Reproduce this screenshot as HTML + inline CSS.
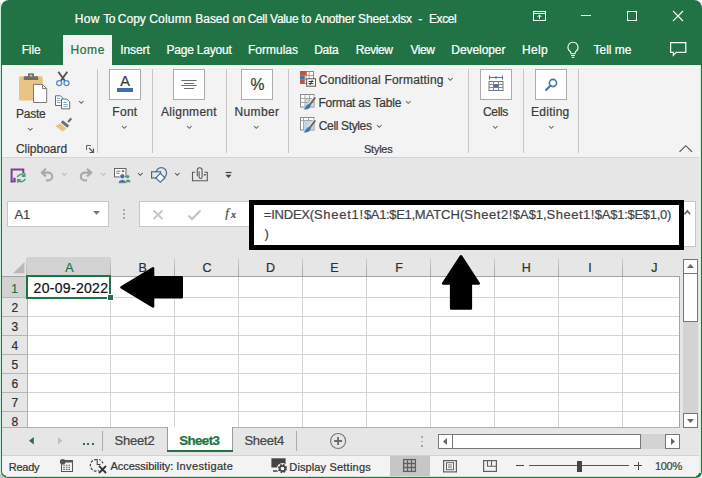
<!DOCTYPE html>
<html><head><meta charset="utf-8"><title>Excel</title>
<style>
html,body{margin:0;padding:0;background:#fff;}
body{width:702px;height:478px;overflow:hidden;position:relative;font-family:"Liberation Sans",sans-serif;}
#win{position:absolute;left:0;top:0;width:702px;height:478px;overflow:hidden;}
#frame{position:absolute;left:1px;top:0;width:701px;height:478px;background:#217346;border-radius:8px 8px 6px 7px;}
.a{position:absolute;}
.t{position:absolute;white-space:pre;line-height:normal;-webkit-text-stroke:0.22px currentColor;}
svg{position:absolute;overflow:visible;}
.sep{position:absolute;width:1px;background:#c6c6c6;top:69px;height:84px;}
.bigbtn{position:absolute;top:69px;width:30px;height:29px;background:#fff;border:1px solid #ababab;box-sizing:content-box;}
</style></head><body>
<div id="win">
<div class="a" style="left:0;top:470px;width:8px;height:8px;background:#c8c8c8"></div>
<div class="a" style="left:0;top:3px;width:1px;height:471px;background:#c9f0da"></div>
<div id="frame"></div>
<div class="a" style="left:2px;top:65px;width:697px;height:92px;background:#f3f3f3;"></div>
<div class="a" style="left:2px;top:157px;width:697px;height:1px;background:#d4d4d4;"></div>
<div class="a" style="left:2px;top:158px;width:697px;height:298px;background:#e6e6e6;"></div>
<div class="a" style="left:699px;top:65px;width:1px;height:92px;background:#f3f3f3;"></div>
<div class="a" style="left:699px;top:157px;width:1px;height:316px;background:#e6ece8;"></div>
<div class="a" style="left:700px;top:65px;width:1px;height:408px;background:#cfeedd;"></div>
<div class="a" style="left:2px;top:455px;width:697px;height:1px;background:#d2d2d2;"></div>
<div class="a" style="left:2px;top:456px;width:697px;height:20px;background:#f3f3f3;border-radius:0 0 4px 5px;"></div>
<div class="a" style="left:6px;top:476px;width:690px;height:1px;background:#c9e4d5;"></div>
<span class="t" style="left:74.74px;top:12.00px;font-size:12px;color:#fff;letter-spacing:0.320px;font-family:'Liberation Sans', sans-serif;">How </span><span class="t" style="left:103.36px;top:12.00px;font-size:12px;color:#fff;letter-spacing:-0.523px;font-family:'Liberation Sans', sans-serif;">To </span><span class="t" style="left:117.80px;top:12.00px;font-size:12px;color:#fff;letter-spacing:0.010px;font-family:'Liberation Sans', sans-serif;">Copy </span><span class="t" style="left:149.20px;top:12.00px;font-size:12px;color:#fff;letter-spacing:0.194px;font-family:'Liberation Sans', sans-serif;">Column </span><span class="t" style="left:195.24px;top:12.00px;font-size:12px;color:#fff;letter-spacing:-0.013px;font-family:'Liberation Sans', sans-serif;">Based </span><span class="t" style="left:232.52px;top:12.00px;font-size:12px;color:#fff;letter-spacing:-0.501px;font-family:'Liberation Sans', sans-serif;">on </span><span class="t" style="left:247.70px;top:12.00px;font-size:12px;color:#fff;letter-spacing:-0.327px;font-family:'Liberation Sans', sans-serif;">Cell </span><span class="t" style="left:270.07px;top:12.00px;font-size:12px;color:#fff;letter-spacing:-0.298px;font-family:'Liberation Sans', sans-serif;">Value </span><span class="t" style="left:301.42px;top:12.00px;font-size:12px;color:#fff;letter-spacing:-0.021px;font-family:'Liberation Sans', sans-serif;">to </span><span class="t" style="left:314.70px;top:12.00px;font-size:12px;color:#fff;letter-spacing:-0.250px;font-family:'Liberation Sans', sans-serif;">Another </span><span class="t" style="left:358.06px;top:12.00px;font-size:12px;color:#fff;letter-spacing:-0.150px;font-family:'Liberation Sans', sans-serif;">Sheet.xlsx  </span><span class="t" style="left:418.29px;top:12.00px;font-size:12px;color:#fff;letter-spacing:0.029px;font-family:'Liberation Sans', sans-serif;">-  </span><span class="t" style="left:429.04px;top:12.00px;font-size:12px;color:#fff;letter-spacing:-0.450px;font-family:'Liberation Sans', sans-serif;">Excel</span>
<svg style="left:533px;top:11px" width="13" height="10" viewBox="0 0 13 10"><rect x="0.5" y="0.5" width="12" height="9" fill="none" stroke="#fff"/><path d="M0.5 2.5H12.5" stroke="#fff"/><path d="M6.5 8V4M4.5 6L6.5 4L8.5 6" fill="none" stroke="#fff"/></svg>
<div class="a" style="left:581px;top:15px;width:10px;height:1px;background:#fff;"></div>
<svg style="left:627px;top:11px" width="10" height="10" viewBox="0 0 10 10"><rect x="0.5" y="0.5" width="9" height="9" fill="none" stroke="#fff"/></svg>
<svg style="left:673px;top:11px" width="10" height="10" viewBox="0 0 10 10"><path d="M0 0L10 10M10 0L0 10" stroke="#fff" stroke-width="1.1"/></svg>
<div class="a" style="left:63px;top:35px;width:49px;height:31px;background:#f3f3f3;"></div>
<span class="t" style="left:21.64px;top:43.00px;font-size:12px;color:#fff;letter-spacing:-0.117px;font-family:'Liberation Sans', sans-serif;">File</span>
<span class="t" style="left:70.44px;top:43.00px;font-size:12px;color:#217346;letter-spacing:0.620px;font-family:'Liberation Sans', sans-serif;">Home</span>
<span class="t" style="left:120.32px;top:43.00px;font-size:12px;color:#fff;letter-spacing:-0.112px;font-family:'Liberation Sans', sans-serif;">Insert</span>
<span class="t" style="left:166.44px;top:43.00px;font-size:12px;color:#fff;letter-spacing:-0.196px;font-family:'Liberation Sans', sans-serif;">Page Layout</span>
<span class="t" style="left:248.04px;top:43.00px;font-size:12px;color:#fff;letter-spacing:-0.004px;font-family:'Liberation Sans', sans-serif;">Formulas</span>
<span class="t" style="left:314.24px;top:43.00px;font-size:12px;color:#fff;letter-spacing:-0.297px;font-family:'Liberation Sans', sans-serif;">Data</span>
<span class="t" style="left:355.64px;top:43.00px;font-size:12px;color:#fff;letter-spacing:-0.406px;font-family:'Liberation Sans', sans-serif;">Review</span>
<span class="t" style="left:410.47px;top:43.00px;font-size:12px;color:#fff;letter-spacing:-0.433px;font-family:'Liberation Sans', sans-serif;">View</span>
<span class="t" style="left:451.34px;top:43.00px;font-size:12px;color:#fff;letter-spacing:-0.069px;font-family:'Liberation Sans', sans-serif;">Developer</span>
<span class="t" style="left:521.94px;top:43.00px;font-size:12px;color:#fff;letter-spacing:0.327px;font-family:'Liberation Sans', sans-serif;">Help</span>
<span class="t" style="left:593.56px;top:43.00px;font-size:12px;color:#fff;letter-spacing:-0.010px;font-family:'Liberation Sans', sans-serif;">Tell me</span>
<svg style="left:566.3px;top:41.3px" width="14" height="18" viewBox="0 0 14 18"><path d="M7 1.2a5 5 0 0 0-3 9c.7.7 1 1.5 1 2.6h4c0-1.100 .3-1.900 1-2.600a5 5 0 0 0-3-9z" fill="none" stroke="#fff" stroke-width="1.1"/><path d="M5.2 14.500H8.800M5.700 16.300H8.300" stroke="#fff" stroke-width="1"/></svg>
<svg style="left:670px;top:42px" width="17" height="14" viewBox="0 0 17 14"><path d="M0.600 0.600H15.800V10.400H6.300L3.300 13.400V10.400H0.600Z" fill="none" stroke="#fff" stroke-width="1.2"/></svg>
<div class="sep" style="left:97px"></div>
<div class="sep" style="left:152px"></div>
<div class="sep" style="left:226px"></div>
<div class="sep" style="left:288px"></div>
<div class="sep" style="left:468px"></div>
<div class="sep" style="left:523px"></div>
<div class="sep" style="left:578px"></div>
<div class="bigbtn" style="left:109px"></div>
<div class="bigbtn" style="left:173px"></div>
<div class="bigbtn" style="left:241px"></div>
<div class="bigbtn" style="left:480px"></div>
<div class="bigbtn" style="left:535px"></div>
<svg style="left:18px;top:72px" width="30" height="32" viewBox="0 0 30 32"><rect x="1" y="4.200" width="23.700" height="24.300" rx="1.500" fill="#eac282"/>
<path d="M5.800 8V5.300A1 1 0 0 1 6.800 4.300H10V2.200A1 1 0 0 1 11 1.200H15A1 1 0 0 1 16 2.200V4.300H19.200A1 1 0 0 1 20.200 5.300V8Z" fill="#6e6e6e"/>
<rect x="11.800" y="2.600" width="2.400" height="1.900" fill="#eac282"/>
<path d="M15.500 12.400H24.500L28.700 16.600V30.500H15.500Z" fill="#fff" stroke="#7a7a7a" stroke-width="1"/>
<path d="M24.500 12.400V16.600H28.700" fill="none" stroke="#7a7a7a" stroke-width="1"/></svg>
<span class="t" style="left:16.04px;top:107.00px;font-size:12px;color:#3a3a3a;letter-spacing:-0.272px;font-family:'Liberation Sans', sans-serif;">Paste</span>
<svg style="left:28.3px;top:128.15px" width="4.6" height="2.3" viewBox="0 0 4.6 2.3"><path d="M0 0 L2.3 2.3 L4.6 0" fill="none" stroke="#606060" stroke-width="1.05"/></svg>
<svg style="left:55px;top:71px" width="16" height="16" viewBox="0 0 16 16"><path d="M3.300 0.700L10 10M12.300 0.700L5.600 10" stroke="#555" stroke-width="1.900" fill="none"/>
<circle cx="4.200" cy="12.100" r="2.500" fill="#f3f3f3" stroke="#4f8fd0" stroke-width="1.300"/>
<circle cx="11.500" cy="12.100" r="2.500" fill="#f3f3f3" stroke="#4f8fd0" stroke-width="1.300"/></svg>
<svg style="left:54px;top:95px" width="17" height="15" viewBox="0 0 17 15"><path d="M1.500 0.800H6.500L8.700 3V10.500H1.500Z" fill="#fff" stroke="#6a6a6a" stroke-width="1"/>
<path d="M3 3.500H6M3 5.500H6.500M3 7.500H6.500" stroke="#4a8fb0" stroke-width=".7"/>
<path d="M7.500 4H12.800L15.700 6.900V13.800H7.500Z" fill="#fff" stroke="#6a6a6a" stroke-width="1"/>
<path d="M9.300 7.500H12.500M9.300 9.500H13.800M9.300 11.500H13.800" stroke="#4a8fb0" stroke-width=".7"/></svg>
<svg style="left:78.8px;top:101.05px" width="4.6" height="2.3" viewBox="0 0 4.6 2.3"><path d="M0 0 L2.3 2.3 L4.6 0" fill="none" stroke="#606060" stroke-width="1.05"/></svg>
<svg style="left:55px;top:117px" width="17" height="15" viewBox="0 0 17 15"><path d="M12.300 4.300L15 1.200A1.100 1.100 0 0 1 16.600 2.700L13.800 5.800Z" fill="#6e6e6e"/>
<path d="M7.800 3.300L14.300 8.600L12.300 10.800L5.800 5.600Z" fill="#6e6e6e"/>
<path d="M5 6.200L11.700 11.500L7.500 14.600L0.500 9.300Z" fill="#eac282"/></svg>
<span class="t" style="left:15.90px;top:142.00px;font-size:12px;color:#3a3a3a;letter-spacing:-0.014px;font-family:'Liberation Sans', sans-serif;">Clipboard</span>
<svg style="left:86px;top:145px" width="9" height="9" viewBox="0 0 9 9"><path d="M0.500 5V0.500H5" fill="none" stroke="#666" stroke-width="1"/><path d="M3 3L7 7M7.500 3.500V7.500H3.500" fill="none" stroke="#555" stroke-width="1.100"/></svg>
<span class="t" style="left:120.18px;top:73.00px;font-size:14.5px;color:#3a3a3a;letter-spacing:0.000px;font-family:'Liberation Sans', sans-serif;">A</span>
<div class="a" style="left:117px;top:88px;width:16px;height:4px;background:#3f6cab;"></div>
<span class="t" style="left:112.34px;top:105.00px;font-size:12px;color:#3a3a3a;letter-spacing:0.273px;font-family:'Liberation Sans', sans-serif;">Font</span>
<svg style="left:122.3px;top:126.14999999999999px" width="4.6" height="2.3" viewBox="0 0 4.6 2.3"><path d="M0 0 L2.3 2.3 L4.6 0" fill="none" stroke="#606060" stroke-width="1.05"/></svg>
<svg style="left:181px;top:80px" width="16" height="10" viewBox="0 0 16 10"><path d="M0.300 0.500H15.700M3 3.500H13M0.300 5.500H15.700M3 8.500H13" stroke="#707070" stroke-width="1"/></svg>
<span class="t" style="left:161.00px;top:105.00px;font-size:12px;color:#3a3a3a;letter-spacing:0.286px;font-family:'Liberation Sans', sans-serif;">Alignment</span>
<svg style="left:186.7px;top:126.14999999999999px" width="4.6" height="2.3" viewBox="0 0 4.6 2.3"><path d="M0 0 L2.3 2.3 L4.6 0" fill="none" stroke="#606060" stroke-width="1.05"/></svg>
<span class="t" style="left:250.41px;top:76.00px;font-size:15.7px;color:#3a3a3a;letter-spacing:0.000px;font-family:'Liberation Sans', sans-serif;">%</span>
<span class="t" style="left:234.44px;top:105.00px;font-size:12px;color:#3a3a3a;letter-spacing:0.376px;font-family:'Liberation Sans', sans-serif;">Number</span>
<svg style="left:254.39999999999998px;top:126.14999999999999px" width="4.6" height="2.3" viewBox="0 0 4.6 2.3"><path d="M0 0 L2.3 2.3 L4.6 0" fill="none" stroke="#606060" stroke-width="1.05"/></svg>
<svg style="left:300px;top:71px" width="17" height="17" viewBox="0 0 17 17"><rect x="0.500" y="0.500" width="13" height="12" fill="#fff" stroke="#8a8a8a"/><path d="M0.500 4.500H13.500M0.500 8.500H13.500M4.800 0.500V12.500M9.200 0.500V12.500" stroke="#a0a0a0" stroke-width="1"/><rect x="0" y="0" width="6.800" height="4.300" fill="#c0563a"/><rect x="0" y="4.800" width="4.600" height="3.600" fill="#4472a8"/><rect x="0" y="8.800" width="4.600" height="4.200" fill="#c0563a"/><rect x="5" y="4.800" width="2" height="3.500" fill="#e9b9a8"/><rect x="6.700" y="7.800" width="8.800" height="7.400" fill="#fff" stroke="#555" stroke-width="1"/><path d="M8.700 10.500H13.500M8.700 12.600H13.500M12.300 9.200L10 14" stroke="#333" stroke-width="1"/></svg>
<svg style="left:300px;top:94.3px" width="17" height="17" viewBox="0 0 17 17"><rect x="0.500" y="0.500" width="13.500" height="12.500" fill="#fff" stroke="#8a8a8a"/><rect x="5" y="4.500" width="8.500" height="8" fill="#cdd8e6"/><path d="M0.500 4.500H14M0.500 8.500H14M5 0.500V13M9.500 0.500V13" stroke="#a8a8a8" stroke-width="1"/><path d="M8 9.500L14.300 1.800L16.200 3.300L10 11.300Z" fill="#f3f3f3"/><path d="M9 10L14.600 2.800L16 4L10.600 11.300Z" fill="#686868"/><path d="M9.200 9.700L10.900 11.200C10.500 14.500 7 16 3.500 15.300C6 14 6 10.500 9.200 9.700Z" fill="#3e76b5"/></svg>
<svg style="left:300px;top:117px" width="17" height="17" viewBox="0 0 17 17"><rect x="0.500" y="0.500" width="13.500" height="12.500" fill="#fff" stroke="#8a8a8a"/><rect x="3.500" y="3.500" width="10" height="9" fill="#c9d4e2"/><path d="M0.500 3.500H14M3.500 0.500V13M8.500 0.500V3.500" stroke="#a8a8a8" stroke-width="1"/><path d="M8 9.500L14.300 1.800L16.200 3.300L10 11.300Z" fill="#f3f3f3"/><path d="M9 10L14.600 2.800L16 4L10.600 11.300Z" fill="#686868"/><path d="M9.200 9.700L10.900 11.200C10.500 14.500 7 16 3.500 15.300C6 14 6 10.500 9.200 9.700Z" fill="#3e76b5"/></svg>
<span class="t" style="left:318.80px;top:73.00px;font-size:12px;color:#3a3a3a;letter-spacing:0.187px;font-family:'Liberation Sans', sans-serif;">Conditional Formatting</span>
<svg style="left:448.2px;top:78.35px" width="4.6" height="2.3" viewBox="0 0 4.6 2.3"><path d="M0 0 L2.3 2.3 L4.6 0" fill="none" stroke="#606060" stroke-width="1.05"/></svg>
<span class="t" style="left:318.44px;top:96.00px;font-size:12px;color:#3a3a3a;letter-spacing:-0.202px;font-family:'Liberation Sans', sans-serif;">Format as Table</span>
<svg style="left:405.7px;top:101.35px" width="4.6" height="2.3" viewBox="0 0 4.6 2.3"><path d="M0 0 L2.3 2.3 L4.6 0" fill="none" stroke="#606060" stroke-width="1.05"/></svg>
<span class="t" style="left:318.80px;top:119.00px;font-size:12px;color:#3a3a3a;letter-spacing:-0.358px;font-family:'Liberation Sans', sans-serif;">Cell Styles</span>
<svg style="left:376.5px;top:124.55px" width="4.6" height="2.3" viewBox="0 0 4.6 2.3"><path d="M0 0 L2.3 2.3 L4.6 0" fill="none" stroke="#606060" stroke-width="1.05"/></svg>
<span class="t" style="left:364.00px;top:143.00px;font-size:11px;color:#3a3a3a;letter-spacing:-0.253px;font-family:'Liberation Sans', sans-serif;">Styles</span>
<svg style="left:488px;top:75px" width="16" height="17" viewBox="0 0 16 17"><path d="M1.500 2.500H14.500M1.500 0.500V4.500M14.500 0.500V4.500M8 1V4" stroke="#4472a8" stroke-width="1"/>
<rect x="1" y="6.500" width="14" height="9" fill="#fff" stroke="#777"/>
<path d="M1 9.500H15M1 12.500H15M5.500 6.500V15.500M10.500 6.500V15.500" stroke="#888" stroke-width="1"/>
<rect x="5.500" y="9.500" width="5" height="3" fill="#4472a8"/></svg>
<span class="t" style="left:483.00px;top:105.00px;font-size:12px;color:#3a3a3a;letter-spacing:-0.338px;font-family:'Liberation Sans', sans-serif;">Cells</span>
<svg style="left:493.3px;top:126.14999999999999px" width="4.6" height="2.3" viewBox="0 0 4.6 2.3"><path d="M0 0 L2.3 2.3 L4.6 0" fill="none" stroke="#606060" stroke-width="1.05"/></svg>
<svg style="left:545px;top:78px" width="13" height="13" viewBox="0 0 13 13"><circle cx="8" cy="5" r="3.600" fill="none" stroke="#4472a8" stroke-width="1.600"/><path d="M5.300 7.700L1 12" stroke="#4472a8" stroke-width="2" stroke-linecap="round"/></svg>
<span class="t" style="left:531.04px;top:105.00px;font-size:12px;color:#3a3a3a;letter-spacing:0.253px;font-family:'Liberation Sans', sans-serif;">Editing</span>
<svg style="left:548.7px;top:126.14999999999999px" width="4.6" height="2.3" viewBox="0 0 4.6 2.3"><path d="M0 0 L2.3 2.3 L4.6 0" fill="none" stroke="#606060" stroke-width="1.05"/></svg>
<svg style="left:678.7px;top:144.8px" width="13.6" height="7.4" viewBox="0 0 13.6 7.4"><path d="M0.500 6.900L6.800 0.700L13.100 6.900" fill="none" stroke="#505050" stroke-width="1.150"/></svg>
<svg style="left:10px;top:167.5px" width="17" height="16" viewBox="0 0 17 16"><path d="M1.600 14.300V1.600H13.300V5.500" fill="none" stroke="#7b3f98" stroke-width="2"/>
<path d="M0.600 13.600H5.500" stroke="#7b3f98" stroke-width="1.600"/><rect x="3.300" y="9.800" width="2.300" height="4" fill="#7b3f98"/>
<path d="M7.300 9.300A4 4 0 0 1 14.200 7.700M14.800 5.200V8.300H11.700" fill="none" stroke="#43a374" stroke-width="1.500"/>
<path d="M15.200 10.700A4 4 0 0 1 8.300 12.300M7.700 14.800V11.700H10.800" fill="none" stroke="#43a374" stroke-width="1.500"/></svg>
<svg style="left:40px;top:168px" width="14" height="13" viewBox="0 0 14 13"><path d="M6 0.800L1.700 4.600L6 8.400M2.200 4.600H8.300A3.900 3.900 0 0 1 8.300 12.400H6" fill="none" stroke="#a9a9a9" stroke-width="2.100" stroke-linejoin="round"/></svg>
<svg style="left:61.8px;top:172.85px" width="4.6" height="2.3" viewBox="0 0 4.6 2.3"><path d="M0 0 L2.3 2.3 L4.6 0" fill="none" stroke="#b5b5b5" stroke-width="1.05"/></svg>
<svg style="left:79.2px;top:168px" width="14" height="13" viewBox="0 0 14 13"><path d="M8 0.800L12.300 4.600L8 8.400M11.800 4.600H5.700A3.900 3.900 0 0 0 5.700 12.400H8" fill="none" stroke="#a9a9a9" stroke-width="2.100" stroke-linejoin="round"/></svg>
<svg style="left:100.60000000000001px;top:172.85px" width="4.6" height="2.3" viewBox="0 0 4.6 2.3"><path d="M0 0 L2.3 2.3 L4.6 0" fill="none" stroke="#b5b5b5" stroke-width="1.05"/></svg>
<svg style="left:113.6px;top:167.8px" width="17" height="16" viewBox="0 0 17 16"><rect x="0.500" y="0.500" width="11.500" height="8.400" fill="#fdfdfd" stroke="#666"/>
<path d="M2.300 3.200H6.500M2.300 5.300H5.500" stroke="#777" stroke-width="1"/><rect x="8" y="2.200" width="2.200" height="1.800" fill="#666"/>
<circle cx="8.300" cy="8.300" r="2.700" fill="#e6e6e6"/><circle cx="8.300" cy="8.300" r="2.100" fill="#41719c"/><path d="M4.300 15.200C4.300 10.500 12.300 10.500 12.300 15.200Z" fill="#41719c" stroke="#e6e6e6" stroke-width=".6"/>
<circle cx="13.700" cy="8.600" r="1.700" fill="#4f9a78"/><path d="M11.800 14.200C11.300 10.700 16.600 10.700 16.600 14.200Z" fill="#4f9a78"/></svg>
<svg style="left:137.79999999999998px;top:173.15px" width="4.6" height="2.3" viewBox="0 0 4.6 2.3"><path d="M0 0 L2.3 2.3 L4.6 0" fill="none" stroke="#505050" stroke-width="1.05"/></svg>
<svg style="left:150.5px;top:166.8px" width="17" height="16" viewBox="0 0 17 16"><circle cx="10.300" cy="6" r="5.300" fill="none" stroke="#41719c" stroke-width="1.200"/>
<rect x="0.600" y="4.800" width="9" height="6.200" fill="#e6e6e6" stroke="#5a5a5a" stroke-width="1.100"/>
<path d="M9.300 6.300L14 11L9.300 15.200L4.800 11Z" fill="#fdfdfd" stroke="#41719c" stroke-width="1.200"/></svg>
<svg style="left:174.7px;top:173.15px" width="4.6" height="2.3" viewBox="0 0 4.6 2.3"><path d="M0 0 L2.3 2.3 L4.6 0" fill="none" stroke="#505050" stroke-width="1.05"/></svg>
<svg style="left:192.3px;top:166.8px" width="17" height="15" viewBox="0 0 17 15"><path d="M3.300 5.300H0.500V13.800H15.300V5.300H12.500" fill="none" stroke="#5a5a5a" stroke-width="1.100"/>
<path d="M5.300 9.300V3.200A2.400 2.400 0 0 1 10.100 3.200V10A1.500 1.500 0 0 1 7.100 10V4.300" fill="none" stroke="#5a5a5a" stroke-width="1.100"/>
<rect x="11.800" y="7" width="2" height="1.500" fill="#5a5a5a"/></svg>
<svg style="left:225px;top:172px" width="7" height="6" viewBox="0 0 7 6"><path d="M0.500 0.500H6.500" stroke="#444" stroke-width="1.200"/><path d="M0.500 2.800H6.500L3.500 6Z" fill="#444"/></svg>
<div class="a" style="left:7px;top:201px;width:102px;height:26px;background:#fff;box-sizing:border-box;border:1px solid #c6c6c6;"></div>
<span class="t" style="left:14.50px;top:207.00px;font-size:13px;color:#444;letter-spacing:-0.275px;font-family:'Liberation Sans', sans-serif;">A1</span>
<svg style="left:93px;top:211.4px" width="7" height="3.7" viewBox="0 0 7 3.7"><path d="M0 0H7L3.500 3.700Z" fill="#777"/></svg>
<div class="a" style="left:122.8px;top:209px;width:1.9px;height:1.9px;background:#a9a9a9;"></div>
<div class="a" style="left:122.8px;top:213px;width:1.9px;height:1.9px;background:#a9a9a9;"></div>
<div class="a" style="left:122.8px;top:217px;width:1.9px;height:1.9px;background:#a9a9a9;"></div>
<div class="a" style="left:139px;top:201px;width:111px;height:26px;background:#fff;box-sizing:border-box;border:1px solid #c6c6c6;"></div>
<svg style="left:153px;top:209.5px" width="10" height="9.5" viewBox="0 0 10 9.5"><path d="M0.500 0.500L9.500 9M9.500 0.500L0.500 9" stroke="#c6c6c6" stroke-width="1.900"/></svg>
<svg style="left:188px;top:209.5px" width="13" height="9.5" viewBox="0 0 13 9.5"><path d="M0.500 5.500L4 9L12.500 0.500" fill="none" stroke="#c6c6c6" stroke-width="2.300"/></svg>
<span class="t" style="left:225.23px;top:205.00px;font-size:13.2px;color:#4a4a4a;letter-spacing:0.000px;font-family:'Liberation Serif', serif;font-style:italic;">f</span>
<span class="t" style="left:231.07px;top:208.60px;font-size:10px;color:#4a4a4a;letter-spacing:0.000px;font-family:'Liberation Serif', serif;font-weight:bold;font-style:italic;">x</span>
<div class="a" style="left:249px;top:201px;width:447px;height:46px;background:#fff;box-sizing:border-box;border:1px solid #c6c6c6;"></div>
<div class="a" style="left:249px;top:200px;width:434.5px;height:50px;background:transparent;box-sizing:border-box;border:5px solid #000;"></div>
<span class="t" style="left:263.78px;top:207.00px;font-size:13px;color:#444;letter-spacing:-0.217px;font-family:'Liberation Sans', sans-serif;">=INDEX(</span><span class="t" style="left:313.92px;top:207.00px;font-size:13px;color:#444;letter-spacing:0.749px;font-family:'Liberation Sans', sans-serif;">Sheet1!</span><span class="t" style="left:363.97px;top:207.00px;font-size:13px;color:#444;letter-spacing:-0.349px;font-family:'Liberation Sans', sans-serif;">$A1:$E1,</span><span class="t" style="left:414.66px;top:207.00px;font-size:13px;color:#444;letter-spacing:-0.004px;font-family:'Liberation Sans', sans-serif;">MATCH(</span><span class="t" style="left:464.22px;top:207.00px;font-size:13px;color:#444;letter-spacing:0.549px;font-family:'Liberation Sans', sans-serif;">Sheet2!</span><span class="t" style="left:512.87px;top:207.00px;font-size:13px;color:#444;letter-spacing:-0.066px;font-family:'Liberation Sans', sans-serif;">$A$1,</span><span class="t" style="left:546.51px;top:207.00px;font-size:13px;color:#444;letter-spacing:0.506px;font-family:'Liberation Sans', sans-serif;">Sheet1!</span><span class="t" style="left:594.87px;top:207.00px;font-size:13px;color:#444;letter-spacing:-0.271px;font-family:'Liberation Sans', sans-serif;">$A$1:$E$1,0)</span>
<span class="t" style="left:264.40px;top:226.00px;font-size:13px;color:#444;letter-spacing:0.000px;font-family:'Liberation Sans', sans-serif;">)</span>
<svg style="left:684.3px;top:210px" width="6.6" height="4.4" viewBox="0 0 6.6 4.4"><path d="M0.500 4.200L3.300 0.900L6.100 4.200" fill="none" stroke="#666" stroke-width="1.700"/></svg>
<div class="a" style="left:2px;top:257px;width:678px;height:170px;background:#fff;"></div>
<div class="a" style="left:2px;top:257px;width:678px;height:19px;background:#e6e6e6;"></div>
<div class="a" style="left:2px;top:257px;width:26px;height:170px;background:#e6e6e6;"></div>
<div class="a" style="left:27px;top:257px;width:83px;height:19px;background:#d2d2d2;"></div>
<div class="a" style="left:2px;top:277px;width:26px;height:20px;background:#d2d2d2;"></div>
<svg style="left:12.5px;top:261.6px" width="11.5" height="11.2" viewBox="0 0 11.5 11.2"><path d="M11.500 0V11.200H0Z" fill="#b9b9b9"/></svg>
<div class="a" style="left:2px;top:276px;width:678px;height:1px;background:#a3a3a3;"></div>
<div class="a" style="left:27px;top:277px;width:1px;height:150px;background:#b0b0b0;"></div>
<div class="a" style="left:26px;top:258px;width:1px;height:18px;background:linear-gradient(#d4d4d4,#b0b0b0);"></div>
<div class="a" style="left:110px;top:258px;width:1px;height:18px;background:linear-gradient(#cfcfcf,#a6a6a6);"></div>
<div class="a" style="left:110px;top:277px;width:1px;height:150px;background:#d4d4d4;"></div>
<div class="a" style="left:174px;top:258px;width:1px;height:18px;background:linear-gradient(#cfcfcf,#a6a6a6);"></div>
<div class="a" style="left:174px;top:277px;width:1px;height:150px;background:#d4d4d4;"></div>
<div class="a" style="left:238px;top:258px;width:1px;height:18px;background:linear-gradient(#cfcfcf,#a6a6a6);"></div>
<div class="a" style="left:238px;top:277px;width:1px;height:150px;background:#d4d4d4;"></div>
<div class="a" style="left:302px;top:258px;width:1px;height:18px;background:linear-gradient(#cfcfcf,#a6a6a6);"></div>
<div class="a" style="left:302px;top:277px;width:1px;height:150px;background:#d4d4d4;"></div>
<div class="a" style="left:366px;top:258px;width:1px;height:18px;background:linear-gradient(#cfcfcf,#a6a6a6);"></div>
<div class="a" style="left:366px;top:277px;width:1px;height:150px;background:#d4d4d4;"></div>
<div class="a" style="left:430px;top:258px;width:1px;height:18px;background:linear-gradient(#cfcfcf,#a6a6a6);"></div>
<div class="a" style="left:430px;top:277px;width:1px;height:150px;background:#d4d4d4;"></div>
<div class="a" style="left:494px;top:258px;width:1px;height:18px;background:linear-gradient(#cfcfcf,#a6a6a6);"></div>
<div class="a" style="left:494px;top:277px;width:1px;height:150px;background:#d4d4d4;"></div>
<div class="a" style="left:558px;top:258px;width:1px;height:18px;background:linear-gradient(#cfcfcf,#a6a6a6);"></div>
<div class="a" style="left:558px;top:277px;width:1px;height:150px;background:#d4d4d4;"></div>
<div class="a" style="left:622px;top:258px;width:1px;height:18px;background:linear-gradient(#cfcfcf,#a6a6a6);"></div>
<div class="a" style="left:622px;top:277px;width:1px;height:150px;background:#d4d4d4;"></div>
<div class="a" style="left:2px;top:297px;width:26px;height:1px;background:#b5b5b5;"></div>
<div class="a" style="left:28px;top:297px;width:652px;height:1px;background:#d4d4d4;"></div>
<div class="a" style="left:2px;top:316px;width:26px;height:1px;background:#b5b5b5;"></div>
<div class="a" style="left:28px;top:316px;width:652px;height:1px;background:#d4d4d4;"></div>
<div class="a" style="left:2px;top:335px;width:26px;height:1px;background:#b5b5b5;"></div>
<div class="a" style="left:28px;top:335px;width:652px;height:1px;background:#d4d4d4;"></div>
<div class="a" style="left:2px;top:354px;width:26px;height:1px;background:#b5b5b5;"></div>
<div class="a" style="left:28px;top:354px;width:652px;height:1px;background:#d4d4d4;"></div>
<div class="a" style="left:2px;top:373px;width:26px;height:1px;background:#b5b5b5;"></div>
<div class="a" style="left:28px;top:373px;width:652px;height:1px;background:#d4d4d4;"></div>
<div class="a" style="left:2px;top:392px;width:26px;height:1px;background:#b5b5b5;"></div>
<div class="a" style="left:28px;top:392px;width:652px;height:1px;background:#d4d4d4;"></div>
<div class="a" style="left:2px;top:411px;width:26px;height:1px;background:#b5b5b5;"></div>
<div class="a" style="left:28px;top:411px;width:652px;height:1px;background:#d4d4d4;"></div>
<div class="a" style="left:679px;top:276px;width:1px;height:151px;background:#a3a3a3;"></div>
<span class="t" style="left:65.14px;top:260.50px;font-size:12.5px;color:#217346;letter-spacing:0.000px;font-family:'Liberation Sans', sans-serif;">A</span>
<span class="t" style="left:138.46px;top:260.50px;font-size:12.5px;color:#303030;letter-spacing:0.000px;font-family:'Liberation Sans', sans-serif;">B</span>
<span class="t" style="left:202.61px;top:260.50px;font-size:12.5px;color:#303030;letter-spacing:0.000px;font-family:'Liberation Sans', sans-serif;">C</span>
<span class="t" style="left:265.98px;top:260.50px;font-size:12.5px;color:#303030;letter-spacing:0.000px;font-family:'Liberation Sans', sans-serif;">D</span>
<span class="t" style="left:330.29px;top:260.50px;font-size:12.5px;color:#303030;letter-spacing:0.000px;font-family:'Liberation Sans', sans-serif;">E</span>
<span class="t" style="left:395.22px;top:260.50px;font-size:12.5px;color:#303030;letter-spacing:0.000px;font-family:'Liberation Sans', sans-serif;">F</span>
<span class="t" style="left:457.28px;top:260.50px;font-size:12.5px;color:#303030;letter-spacing:0.000px;font-family:'Liberation Sans', sans-serif;">G</span>
<span class="t" style="left:521.78px;top:260.50px;font-size:12.5px;color:#303030;letter-spacing:0.000px;font-family:'Liberation Sans', sans-serif;">H</span>
<span class="t" style="left:588.27px;top:260.50px;font-size:12.5px;color:#303030;letter-spacing:0.000px;font-family:'Liberation Sans', sans-serif;">I</span>
<span class="t" style="left:651.23px;top:260.50px;font-size:12.5px;color:#303030;letter-spacing:0.000px;font-family:'Liberation Sans', sans-serif;">J</span>
<span class="t" style="left:11.31px;top:282.20px;font-size:12px;color:#217346;letter-spacing:0.000px;font-family:'Liberation Sans', sans-serif;">1</span>
<span class="t" style="left:11.46px;top:301.20px;font-size:12px;color:#303030;letter-spacing:0.000px;font-family:'Liberation Sans', sans-serif;">2</span>
<span class="t" style="left:11.50px;top:320.20px;font-size:12px;color:#303030;letter-spacing:0.000px;font-family:'Liberation Sans', sans-serif;">3</span>
<span class="t" style="left:11.50px;top:339.20px;font-size:12px;color:#303030;letter-spacing:0.000px;font-family:'Liberation Sans', sans-serif;">4</span>
<span class="t" style="left:11.47px;top:358.20px;font-size:12px;color:#303030;letter-spacing:0.000px;font-family:'Liberation Sans', sans-serif;">5</span>
<span class="t" style="left:11.43px;top:377.20px;font-size:12px;color:#303030;letter-spacing:0.000px;font-family:'Liberation Sans', sans-serif;">6</span>
<span class="t" style="left:11.46px;top:396.20px;font-size:12px;color:#303030;letter-spacing:0.000px;font-family:'Liberation Sans', sans-serif;">7</span>
<span class="t" style="left:11.46px;top:415.20px;font-size:12px;color:#303030;letter-spacing:0.000px;font-family:'Liberation Sans', sans-serif;">8</span>
<div class="a" style="left:26px;top:275px;width:85px;height:24px;background:transparent;box-sizing:border-box;border:2px solid #217346;"></div>
<div class="a" style="left:107px;top:293.5px;width:5px;height:5px;background:#217346;border:1px solid #fff;box-sizing:content-box;"></div>
<span class="t" style="left:33.60px;top:280.00px;font-size:14px;color:#111;letter-spacing:0.306px;font-family:'Liberation Sans', sans-serif;">20-09-2022</span>
<div class="a" style="left:2px;top:427px;width:697px;height:28px;background:#e6e6e6;"></div>
<div class="a" style="left:2px;top:427px;width:678px;height:1px;background:#b0b0b0;"></div>
<svg style="left:0px;top:0px" width="702" height="478" viewBox="0 0 702 478"><path d="M121.500 287.300L153 268.300V277.300H181.700V297.300H153V306.500Z" fill="#000" stroke="#000" stroke-width="2.600" stroke-linejoin="round"/>
<path d="M461 256.300L478.700 283.500H470.800V308.400H451.200V283.500H443.200Z" fill="#000" stroke="#000" stroke-width="2.600" stroke-linejoin="round"/></svg>
<div class="a" style="left:683px;top:259px;width:15px;height:168px;background:#d3d3d3;"></div>
<div class="a" style="left:683px;top:259px;width:15px;height:15px;background:#fff;box-sizing:border-box;border:1px solid #777;"></div>
<svg style="left:687px;top:264px" width="7" height="4" viewBox="0 0 7 4"><path d="M0 4H7L3.500 0Z" fill="#666"/></svg>
<div class="a" style="left:683px;top:273px;width:15px;height:49px;background:#fff;box-sizing:border-box;border:1px solid #777;"></div>
<div class="a" style="left:683px;top:413px;width:15px;height:15px;background:#fff;box-sizing:border-box;border:1px solid #777;"></div>
<svg style="left:687px;top:418.5px" width="7" height="4" viewBox="0 0 7 4"><path d="M0 0H7L3.500 4Z" fill="#666"/></svg>
<svg style="left:28.6px;top:437px" width="4.8" height="7.6" viewBox="0 0 4.8 7.6"><path d="M4.800 0V7.600L0 3.800Z" fill="#217346"/></svg>
<svg style="left:57.8px;top:437px" width="4.6" height="7.6" viewBox="0 0 4.6 7.6"><path d="M0 0V7.600L4.600 3.800Z" fill="#c0c0c0"/></svg>
<div class="a" style="left:83px;top:443px;width:2px;height:2px;background:#217346;"></div>
<div class="a" style="left:87.3px;top:443px;width:2px;height:2px;background:#217346;"></div>
<div class="a" style="left:91.6px;top:443px;width:2px;height:2px;background:#217346;"></div>
<div class="a" style="left:102px;top:431px;width:1px;height:20px;background:#ababab;"></div>
<span class="t" style="left:114.42px;top:433.00px;font-size:13px;color:#444;letter-spacing:-0.195px;font-family:'Liberation Sans', sans-serif;">Sheet2</span>
<div class="a" style="left:167px;top:427px;width:66px;height:24px;background:#fff;border-left:1px solid #9a9a9a;border-right:1px solid #9a9a9a;box-sizing:border-box;"></div>
<div class="a" style="left:167px;top:449.5px;width:66px;height:2px;background:#217346;"></div>
<span class="t" style="left:179.13px;top:433.00px;font-size:13.3px;color:#217346;letter-spacing:-0.559px;font-family:'Liberation Sans', sans-serif;font-weight:bold;">Sheet3</span>
<span class="t" style="left:244.41px;top:433.00px;font-size:13px;color:#444;letter-spacing:-0.267px;font-family:'Liberation Sans', sans-serif;">Sheet4</span>
<div class="a" style="left:296px;top:431px;width:1px;height:20px;background:#ababab;"></div>
<svg style="left:330px;top:432.8px" width="16" height="16" viewBox="0 0 16 16"><circle cx="8.100" cy="8" r="7.500" fill="none" stroke="#7a7a7a" stroke-width="1.200"/><path d="M4.100 8H12.100M8.100 4V12" stroke="#6a6a6a" stroke-width="1.800"/></svg>
<div class="a" style="left:421.3px;top:436px;width:1.8px;height:1.8px;background:#a6a6a6;"></div>
<div class="a" style="left:421.3px;top:440.5px;width:1.8px;height:1.8px;background:#a6a6a6;"></div>
<div class="a" style="left:421.3px;top:445px;width:1.8px;height:1.8px;background:#a6a6a6;"></div>
<div class="a" style="left:438px;top:434px;width:242px;height:15px;background:#d3d3d3;"></div>
<div class="a" style="left:438px;top:434px;width:15px;height:15px;background:#fff;box-sizing:border-box;border:1px solid #777;"></div>
<svg style="left:443px;top:438px" width="4" height="7" viewBox="0 0 4 7"><path d="M4 0V7L0 3.500Z" fill="#666"/></svg>
<div class="a" style="left:452px;top:434px;width:189px;height:15px;background:#fff;box-sizing:border-box;border:1px solid #777;"></div>
<div class="a" style="left:665px;top:434px;width:15px;height:15px;background:#fff;box-sizing:border-box;border:1px solid #777;"></div>
<svg style="left:671px;top:438px" width="4" height="7" viewBox="0 0 4 7"><path d="M0 0V7L4 3.500Z" fill="#666"/></svg>
<span class="t" style="left:8.82px;top:461.00px;font-size:11px;color:#333;letter-spacing:-0.277px;font-family:'Liberation Sans', sans-serif;">Ready</span>
<svg style="left:60px;top:459px" width="13" height="13" viewBox="0 0 13 13"><rect x="1.500" y="1.500" width="11" height="11" fill="#f3f3f3" stroke="#555" stroke-width="1"/><path d="M1.500 2.300H12.500" stroke="#555" stroke-width="2.400"/><path d="M3.300 6.200H11M3.300 8.300H11M3.300 10.400H11" stroke="#666" stroke-width="1.100" stroke-dasharray="1.600 1"/><circle cx="2.700" cy="2.800" r="2.800" fill="#555"/></svg>
<svg style="left:90px;top:458px" width="18" height="16" viewBox="0 0 18 16"><path d="M6.800 1.600A5.800 5.800 0 1 0 9 12.400" fill="none" stroke="#444" stroke-width="1.200" stroke-dasharray="2.600 1.500"/><path d="M7.200 1V6.500H10.500" fill="none" stroke="#444" stroke-width="1.100"/><path d="M9 1.500A5.800 5.800 0 0 1 13 5.500" fill="none" stroke="#444" stroke-width="1.200" stroke-dasharray="2 1.500"/><path d="M9 7.800L16 15M16 8L9 15" stroke="#333" stroke-width="1.800"/></svg>
<span class="t" style="left:110.50px;top:460.00px;font-size:11px;color:#333;letter-spacing:-0.020px;font-family:'Liberation Sans', sans-serif;">Accessibility: </span><span class="t" style="left:176.21px;top:460.00px;font-size:11px;color:#333;letter-spacing:0.347px;font-family:'Liberation Sans', sans-serif;">Investigate</span>
<svg style="left:271px;top:458px" width="17" height="16" viewBox="0 0 17 16"><rect x="0.400" y="0.300" width="14.200" height="9.200" fill="#444"/><path d="M2 13H8.500" stroke="#444" stroke-width="1.500"/><circle cx="11.500" cy="10.500" r="5.600" fill="#f3f3f3"/><circle cx="11.500" cy="10.500" r="3.600" fill="none" stroke="#444" stroke-width="2" stroke-dasharray="1.700 1.130"/><circle cx="11.500" cy="10.500" r="2.700" fill="none" stroke="#444" stroke-width="1.700"/></svg>
<span class="t" style="left:289.32px;top:461.00px;font-size:11px;color:#333;letter-spacing:0.120px;font-family:'Liberation Sans', sans-serif;">Display </span><span class="t" style="left:329.40px;top:461.00px;font-size:11px;color:#333;letter-spacing:0.235px;font-family:'Liberation Sans', sans-serif;">Settings</span>
<div class="a" style="left:390px;top:456px;width:40px;height:20px;background:#c6c6c6;"></div>
<svg style="left:403px;top:459px" width="13" height="13" viewBox="0 0 13 13"><rect x="0.600" y="0.600" width="11.800" height="11.800" fill="none" stroke="#606060" stroke-width="1.300"/><path d="M0.500 4.500H12.500M0.500 8.500H12.500M4.500 0.500V12.500M8.500 0.500V12.500" stroke="#606060" stroke-width="1.300"/></svg>
<svg style="left:443px;top:459.5px" width="14" height="12.5" viewBox="0 0 14 12.5"><rect x="0.600" y="0.600" width="12.800" height="11.300" fill="none" stroke="#606060" stroke-width="1.200"/><rect x="3.500" y="2.700" width="7" height="7" fill="#fff" stroke="#606060" stroke-width="1"/><path d="M5 4.800H9M5 6.300H9M5 7.800H9" stroke="#606060" stroke-width=".7"/></svg>
<svg style="left:483px;top:459.5px" width="14" height="12" viewBox="0 0 14 12"><rect x="0.600" y="0.600" width="12.800" height="10.800" fill="none" stroke="#606060" stroke-width="1.200"/><path d="M4.500 0.500V6.200H13M8.500 0.500V6.200" fill="none" stroke="#606060" stroke-width="1.100"/></svg>
<div class="a" style="left:516px;top:465px;width:8px;height:1px;background:#444;"></div>
<div class="a" style="left:529px;top:465px;width:100px;height:1px;background:#555;"></div>
<div class="a" style="left:577px;top:460.5px;width:4.5px;height:11.5px;background:#444;"></div>
<div class="a" style="left:634px;top:465px;width:8px;height:1px;background:#444;"></div>
<div class="a" style="left:637.5px;top:461.5px;width:1px;height:8px;background:#444;"></div>
<span class="t" style="left:654.88px;top:460.00px;font-size:11px;color:#444;letter-spacing:-0.274px;font-family:'Liberation Sans', sans-serif;">100%</span>
</div>
</body></html>
